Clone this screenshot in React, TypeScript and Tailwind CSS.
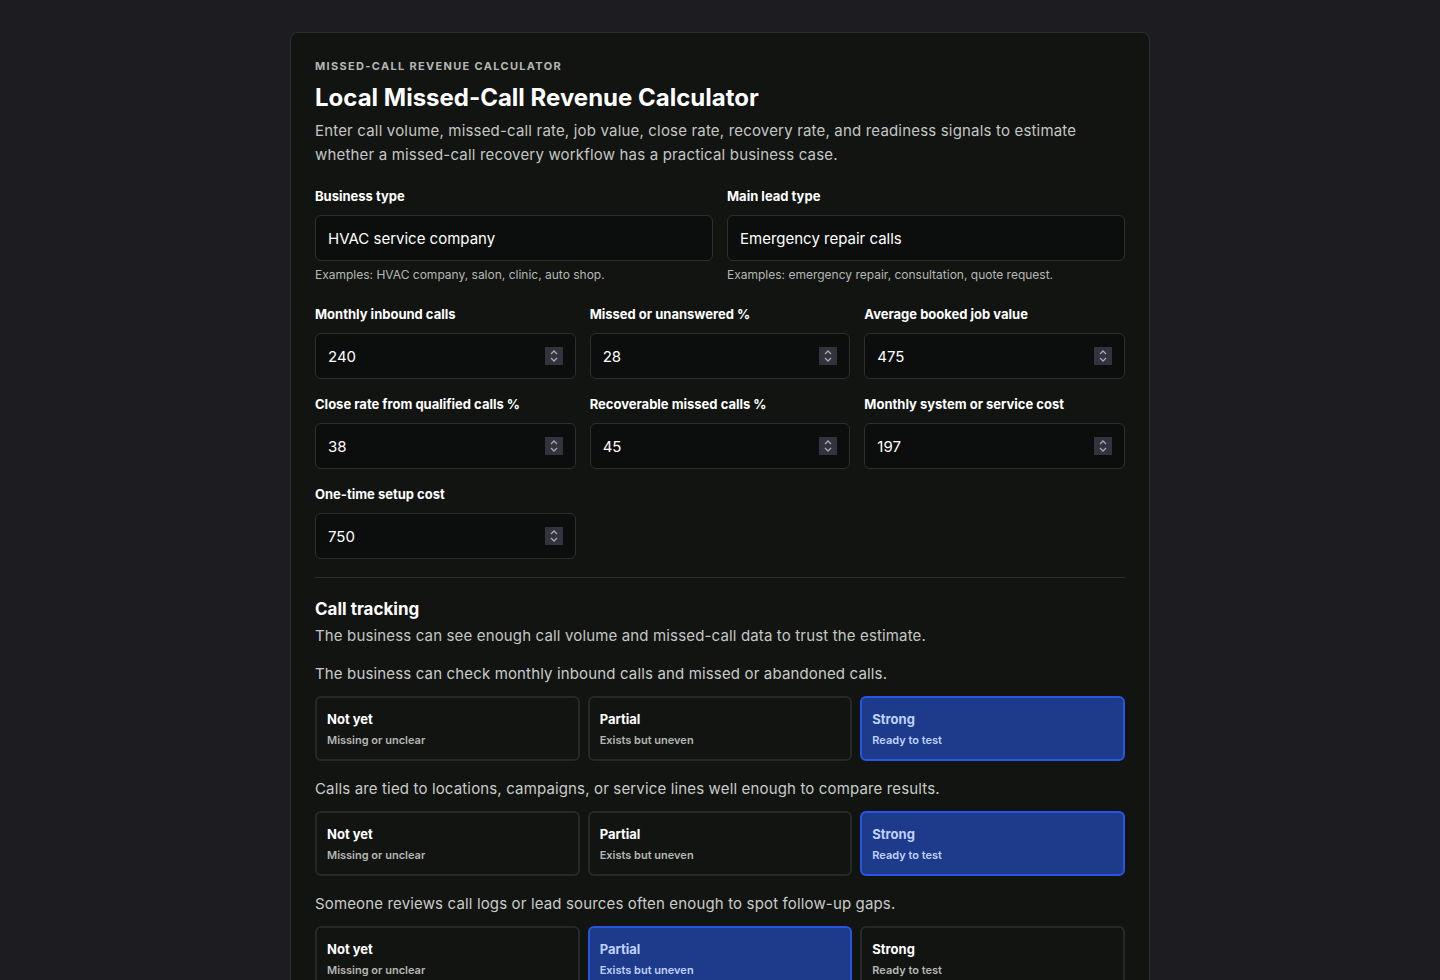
import React from "react";

const font = { fontFamily: "Inter, 'Noto Sans', sans-serif" };

function TextField({ label, value, hint }: { label: string; value: string; hint: string }) {
  return (
    <div className="flex flex-col">
      <label className="text-[13px] font-bold text-white mb-[10px] leading-[18px]">{label}</label>
      <input readOnly value={value} className="h-[46px] rounded-md border border-[#2c302c] bg-[#0c0e0d] px-3 text-[15px] text-white outline-none" />
      <div className="text-[12px] text-[#b4b8b4] mt-[6px] leading-[16px]">{hint}</div>
    </div>
  );
}

function NumField({ label, value }: { label: string; value: string }) {
  return (
    <div className="flex flex-col">
      <label className="text-[13px] font-bold text-white mb-[10px] leading-[18px]">{label}</label>
      <div className="relative">
        <input readOnly value={value} className="w-full h-[46px] rounded-md border border-[#2c302c] bg-[#0c0e0d] px-3 text-[15px] text-white outline-none" />
        <div className="absolute right-[13px] top-[14px] w-[18px] h-[18px] bg-[#33333d] flex items-center justify-center">
          <svg width="10" height="14" viewBox="0 0 10 14" fill="none" stroke="#a8a8b4" strokeWidth="1.3">
            <path d="M2 5 L5 2 L8 5" />
            <path d="M2 9 L5 12 L8 9" />
          </svg>
        </div>
      </div>
    </div>
  );
}

const opts = [
  ["Not yet", "Missing or unclear"],
  ["Partial", "Exists but uneven"],
  ["Strong", "Ready to test"],
];

function Choice({ q, sel }: { q: string; sel: number }) {
  return (
    <div>
      <p className="text-[15px] text-[#c9ccc9] mb-[12px] leading-[20px] tracking-[0.01em]">{q}</p>
      <div className="grid grid-cols-3 gap-[8px]">
        {opts.map(([a, b], i) => (
          <div
            key={a}
            className={
              "h-[65px] rounded-md border-2 px-[10px] flex flex-col justify-center gap-[6px] " +
              (i === sel ? "bg-[#1e3a8a] border-[#2856e0]" : "bg-[#121412] border-[#262a26]")
            }
          >
            <div className={"text-[13px] font-bold leading-[16px] " + (i === sel ? "text-[#bfd3ff]" : "text-white")}>{a}</div>
            <div className={"text-[11px] font-semibold leading-[14px] " + (i === sel ? "text-[#bfd3ff]" : "text-[#b4b8b4]")}>{b}</div>
          </div>
        ))}
      </div>
    </div>
  );
}

export default function App() {
  return (
    <div style={font} className="min-h-[980px] bg-[#1c1c21] pt-[32px] flex justify-center">
      <div className="w-[860px] rounded-t-lg border border-[#2c302c] bg-[#121412] px-[24px] pt-[26px] pb-10">
        <div className="text-[11px] font-bold tracking-[0.12em] text-[#b4b8b4] leading-[14px]">MISSED-CALL REVENUE CALCULATOR</div>
        <h1 className="text-[24px] font-bold text-white mt-[10px] leading-[30px]">Local Missed-Call Revenue Calculator</h1>
        <p className="text-[15px] text-[#c4c7c4] leading-[24px] mt-[6px] tracking-[0.012em]">
          Enter call volume, missed-call rate, job value, close rate, recovery rate, and readiness signals to estimate whether a missed-call recovery workflow has a practical business case.
        </p>
        <div className="grid grid-cols-2 gap-[14px] mt-[20px]">
          <TextField label="Business type" value="HVAC service company" hint="Examples: HVAC company, salon, clinic, auto shop." />
          <TextField label="Main lead type" value="Emergency repair calls" hint="Examples: emergency repair, consultation, quote request." />
        </div>
        <div className="grid grid-cols-3 gap-x-[14px] gap-y-[16px] mt-[22px]">
          <NumField label="Monthly inbound calls" value="240" />
          <NumField label="Missed or unanswered %" value="28" />
          <NumField label="Average booked job value" value="475" />
          <NumField label="Close rate from qualified calls %" value="38" />
          <NumField label="Recoverable missed calls %" value="45" />
          <NumField label="Monthly system or service cost" value="197" />
          <NumField label="One-time setup cost" value="750" />
        </div>
        <div className="border-t border-[#2c302c] mt-[18px] pt-[20px]">
          <h2 className="text-[17px] font-bold text-white leading-[22px]">Call tracking</h2>
          <p className="text-[15px] text-[#c4c7c4] mt-[6px] leading-[20px] tracking-[0.01em]">The business can see enough call volume and missed-call data to trust the estimate.</p>
          <div className="flex flex-col gap-[18px] mt-[18px]">
            <Choice q="The business can check monthly inbound calls and missed or abandoned calls." sel={2} />
            <Choice q="Calls are tied to locations, campaigns, or service lines well enough to compare results." sel={2} />
            <Choice q="Someone reviews call logs or lead sources often enough to spot follow-up gaps." sel={1} />
          </div>
        </div>
      </div>
    </div>
  );
}
